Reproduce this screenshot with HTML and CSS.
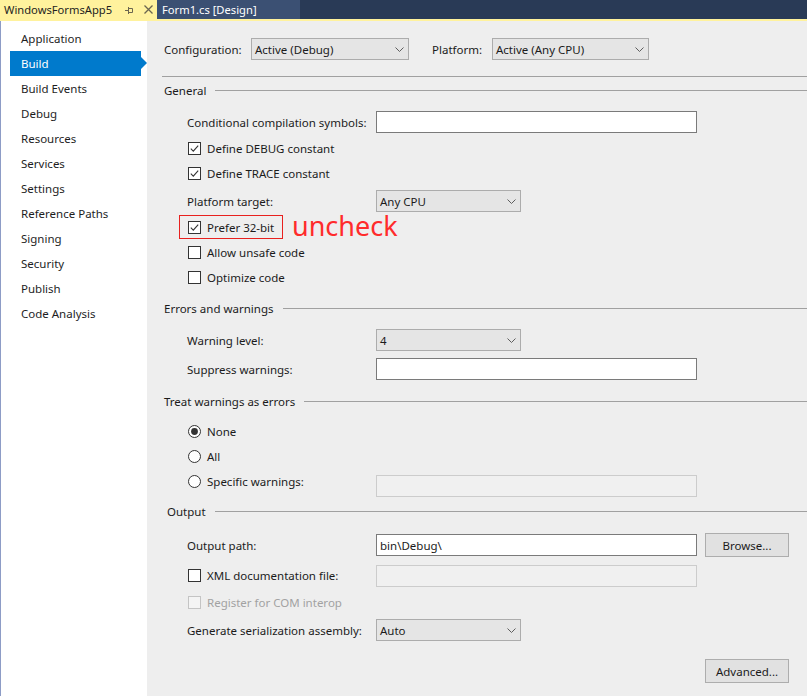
FILE: index.html
```html
<!DOCTYPE html>
<html>
<head>
<meta charset="utf-8">
<link rel="stylesheet" href="styles.css">
</head>
<body>
<div class="app">
  <div class="tabbar">
    <div class="tab tab-active">
      <span class="tab-title">WindowsFormsApp5</span>
      <svg class="pin" width="9" height="8" viewBox="0 0 9 8"><path d="M0 4.5H3M3.5 1V8M3.5 2.5H7.5V6.5H3.5" fill="none" stroke="#6b6650" stroke-width="1"/></svg>
      <svg class="close" width="9" height="9" viewBox="0 0 9 9"><path d="M0.5 0.5L8.5 8.5M8.5 0.5L0.5 8.5" fill="none" stroke="#6b6650" stroke-width="1.3"/></svg>
    </div>
    <div class="tab tab-doc">Form1.cs [Design]</div>
  </div>
  <div class="accent"></div>
  <div class="body">
    <nav class="sidebar">
      <div class="nav-item">Application</div>
      <div class="nav-item nav-selected">Build</div>
      <div class="nav-item">Build Events</div>
      <div class="nav-item">Debug</div>
      <div class="nav-item">Resources</div>
      <div class="nav-item">Services</div>
      <div class="nav-item">Settings</div>
      <div class="nav-item">Reference Paths</div>
      <div class="nav-item">Signing</div>
      <div class="nav-item">Security</div>
      <div class="nav-item">Publish</div>
      <div class="nav-item">Code Analysis</div>
    </nav>
    <main class="page">
      <div class="config">
        <span class="cfg-label">Configuration:</span>
        <div class="select cfg-select"><span class="sel-text">Active (Debug)</span><svg class="chev" width="9" height="5" viewBox="0 0 9 5"><path d="M0.5 0.5L4.5 4.5L8.5 0.5" fill="none" stroke="#5d5d5d"/></svg></div>
        <span class="plat-label">Platform:</span>
        <div class="select plat-select"><span class="sel-text">Active (Any CPU)</span><svg class="chev" width="9" height="5" viewBox="0 0 9 5"><path d="M0.5 0.5L4.5 4.5L8.5 0.5" fill="none" stroke="#5d5d5d"/></svg></div>
      </div>
      <div class="rule"></div>

      <div class="header h-general">General</div>
      <div class="sec">
        <div class="row field r-cond">
          <span class="lbl">Conditional compilation symbols:</span>
          <div class="textbox"></div>
        </div>
        <div class="row check r-debug">
          <svg class="chk" width="13" height="13" viewBox="0 0 13 13"><rect x="0.5" y="0.5" width="12" height="12" fill="#fff" stroke="#333"/><path d="M2.8 6.6L5.3 9.1L10.2 3.6" fill="none" stroke="#333" stroke-width="1.1"/></svg>
          <span>Define DEBUG constant</span>
        </div>
        <div class="row check">
          <svg class="chk" width="13" height="13" viewBox="0 0 13 13"><rect x="0.5" y="0.5" width="12" height="12" fill="#fff" stroke="#333"/><path d="M2.8 6.6L5.3 9.1L10.2 3.6" fill="none" stroke="#333" stroke-width="1.1"/></svg>
          <span>Define TRACE constant</span>
        </div>
        <div class="row field r-plat">
          <span class="lbl">Platform target:</span>
          <div class="select small-select"><span class="sel-text">Any CPU</span><svg class="chev" width="9" height="5" viewBox="0 0 9 5"><path d="M0.5 0.5L4.5 4.5L8.5 0.5" fill="none" stroke="#5d5d5d"/></svg></div>
        </div>
        <div class="row check r-prefer">
          <div class="mark-box">
            <svg class="chk" width="13" height="13" viewBox="0 0 13 13"><rect x="0.5" y="0.5" width="12" height="12" fill="#fff" stroke="#333"/><path d="M2.8 6.6L5.3 9.1L10.2 3.6" fill="none" stroke="#333" stroke-width="1.1"/></svg>
            <span>Prefer 32-bit</span>
          </div>
          <span class="note">uncheck</span>
        </div>
        <div class="row check">
          <svg class="chk" width="13" height="13" viewBox="0 0 13 13"><rect x="0.5" y="0.5" width="12" height="12" fill="#fff" stroke="#333"/></svg>
          <span>Allow unsafe code</span>
        </div>
        <div class="row check">
          <svg class="chk" width="13" height="13" viewBox="0 0 13 13"><rect x="0.5" y="0.5" width="12" height="12" fill="#fff" stroke="#333"/></svg>
          <span>Optimize code</span>
        </div>
      </div>

      <div class="header h-errors">Errors and warnings</div>
      <div class="sec">
        <div class="row field r-warn">
          <span class="lbl">Warning level:</span>
          <div class="select small-select"><span class="sel-text">4</span><svg class="chev" width="9" height="5" viewBox="0 0 9 5"><path d="M0.5 0.5L4.5 4.5L8.5 0.5" fill="none" stroke="#5d5d5d"/></svg></div>
        </div>
        <div class="row field r-suppress">
          <span class="lbl">Suppress warnings:</span>
          <div class="textbox"></div>
        </div>
      </div>

      <div class="header h-treat">Treat warnings as errors</div>
      <div class="sec">
        <div class="row check r-none">
          <svg class="chk" width="13" height="13" viewBox="0 0 13 13"><circle cx="6.5" cy="6.5" r="6" fill="#fff" stroke="#333"/><circle cx="6.5" cy="6.5" r="3.4" fill="#333"/></svg>
          <span>None</span>
        </div>
        <div class="row check">
          <svg class="chk" width="13" height="13" viewBox="0 0 13 13"><circle cx="6.5" cy="6.5" r="6" fill="#fff" stroke="#333"/></svg>
          <span>All</span>
        </div>
        <div class="row check r-specific">
          <div class="radio-label">
            <svg class="chk" width="13" height="13" viewBox="0 0 13 13"><circle cx="6.5" cy="6.5" r="6" fill="#fff" stroke="#333"/></svg>
            <span>Specific warnings:</span>
          </div>
          <div class="textbox disabled specific-box"></div>
        </div>
      </div>

      <div class="header h-output">Output</div>
      <div class="sec">
        <div class="row r-outpath">
          <span class="lbl">Output path:</span>
          <div class="textbox"><span class="tb-text">bin\Debug\</span></div>
          <div class="button browse">Browse...</div>
        </div>
        <div class="row check r-xml">
          <div class="radio-label">
            <svg class="chk" width="13" height="13" viewBox="0 0 13 13"><rect x="0.5" y="0.5" width="12" height="12" fill="#fff" stroke="#333"/></svg>
            <span>XML documentation file:</span>
          </div>
          <div class="textbox disabled"></div>
        </div>
        <div class="row check r-com">
          <svg class="chk" width="13" height="13" viewBox="0 0 13 13"><rect x="0.5" y="0.5" width="12" height="12" fill="#f4f4f4" stroke="#c4c4c4"/></svg>
          <span class="dim">Register for COM interop</span>
        </div>
        <div class="row field r-gen">
          <span class="lbl">Generate serialization assembly:</span>
          <div class="select small-select"><span class="sel-text">Auto</span><svg class="chev" width="9" height="5" viewBox="0 0 9 5"><path d="M0.5 0.5L4.5 4.5L8.5 0.5" fill="none" stroke="#5d5d5d"/></svg></div>
        </div>
        <div class="actions">
          <div class="button advanced">Advanced...</div>
        </div>
      </div>
    </main>
  </div>
</div>
</body>
</html>
```

FILE: styles.css
```css
* { box-sizing: border-box; }
html, body { margin: 0; padding: 0; }
body {
  width: 807px;
  height: 696px;
  overflow: hidden;
  font-family: "Noto Sans", "Open Sans", sans-serif;
  font-size: 11.5px;
  color: #1b1b1b;
  background: #eeeeee;
}
.app { display: flex; flex-direction: column; height: 696px; }

/* tab strip */
.tabbar {
  height: 19px;
  display: flex;
  background: #293a56;
}
.tab {
  display: flex;
  align-items: center;
  height: 19px;
  white-space: nowrap;
  font-size: 11.2px;
}
.tab-active {
  width: 157px;
  background: #fff29d;
  color: #1e1e1e;
  padding-left: 4px;
}
.tab-title { width: 121px; }
.pin { margin-top: 1px; }
.close { margin-left: 10px; }
.tab-doc {
  width: 143px;
  background: #3b5073;
  color: #ffffff;
  padding-left: 5px;
}
.accent { height: 2px; background: #fff29d; }

.body { flex: 1; display: flex; min-height: 0; }

/* left navigation */
.sidebar {
  width: 147px;
  background: #ffffff;
  border-left: 1px solid #8d9cc6;
  padding-top: 5px;
}
.nav-item {
  position: relative;
  height: 25px;
  line-height: 25px;
  margin-left: 9px;
  width: 131px;
  padding-left: 11px;
  color: #1e1e1e;
}
.nav-selected {
  background: #007acc;
  color: #ffffff;
}
.nav-selected::after {
  content: "";
  position: absolute;
  right: -6px;
  top: 6px;
  border-left: 6px solid #007acc;
  border-top: 6.5px solid transparent;
  border-bottom: 6.5px solid transparent;
}

/* property page */
.page {
  flex: 1;
  background: #eeeeee;
  padding: 17px 0 0 17px;
  display: flex;
  flex-direction: column;
}
.config { display: flex; align-items: center; height: 22px; }
.cfg-label { width: 87px; }
.cfg-select { width: 158px; }
.plat-label { margin-left: 23px; width: 60px; }
.plat-select { width: 157px; }

.select {
  height: 22px;
  display: flex;
  align-items: center;
  background: #e5e5e5;
  border: 1px solid #acacac;
  padding: 0 4px 0 3px;
}
.sel-text { flex: 1; white-space: nowrap; }
.chev { flex: none; }
.small-select { width: 145px; }

.rule { height: 1px; background: #a0a0a0; margin: 16px 0 0 -2px; }

.header {
  display: flex;
  align-items: center;
  height: 16px;
  white-space: nowrap;
}
.header::after {
  content: "";
  flex: 1;
  height: 1px;
  background: #a0a0a0;
  margin-left: 9px;
}
.h-general { margin-top: 5px; }
.h-errors { margin-top: 10px; }
.h-treat { margin-top: 13px; }
.h-output { margin-top: 9px; padding-left: 3px; }

.sec { padding-left: 23px; display: flex; flex-direction: column; }

.row { display: flex; align-items: center; height: 25px; white-space: nowrap; }
.row.field { height: 22px; }
.lbl { width: 189px; flex: none; }
.chk { flex: none; margin: 0 6px 0 1px; display: block; }

.textbox {
  width: 321px;
  height: 22px;
  flex: none;
  background: #ffffff;
  border: 1px solid #7a7a7a;
  display: flex;
  align-items: center;
  padding-left: 3px;
}
.textbox.disabled { background: #f0f0f0; border-color: #cccccc; }

.r-cond { margin-top: 13px; }
.r-debug { margin-top: 3px; }
.r-plat { margin-top: 4px; }
.r-prefer { margin-top: 3px; }

.mark-box {
  display: flex;
  align-items: center;
  width: 104px;
  height: 24px;
  margin-left: -8px;
  padding-left: 8px;
  border: 1px solid #e8211f;
  margin-top: -1px;
}
.mark-box .chk { margin-left: 0; }
.note {
  margin-left: 9px;
  font-size: 27px;
  line-height: 25px;
  color: #ff2b2b;
  margin-top: -4px;
}

.r-warn { margin-top: 13px; }
.r-suppress { margin-top: 7px; }

.r-none { margin-top: 10px; }
.radio-label { width: 189px; display: flex; align-items: center; flex: none; }
.r-specific { align-items: flex-start; }
.r-specific .radio-label { height: 25px; }
.specific-box { margin-top: 6px; }

.r-outpath { margin-top: 14px; height: 24px; }
.button {
  height: 24px;
  background: #e1e1e1;
  border: 1px solid #adadad;
  display: flex;
  align-items: center;
  justify-content: center;
  flex: none;
}
.browse { width: 84px; margin-left: 8px; }
.r-xml { margin-top: 6px; }
.r-com { margin-top: 2px; }
.dim { color: #a2a2a2; }
.r-gen { margin-top: 4px; }
.actions { display: flex; margin-top: 18px; padding-left: 518px; }
.advanced { width: 84px; }
```
